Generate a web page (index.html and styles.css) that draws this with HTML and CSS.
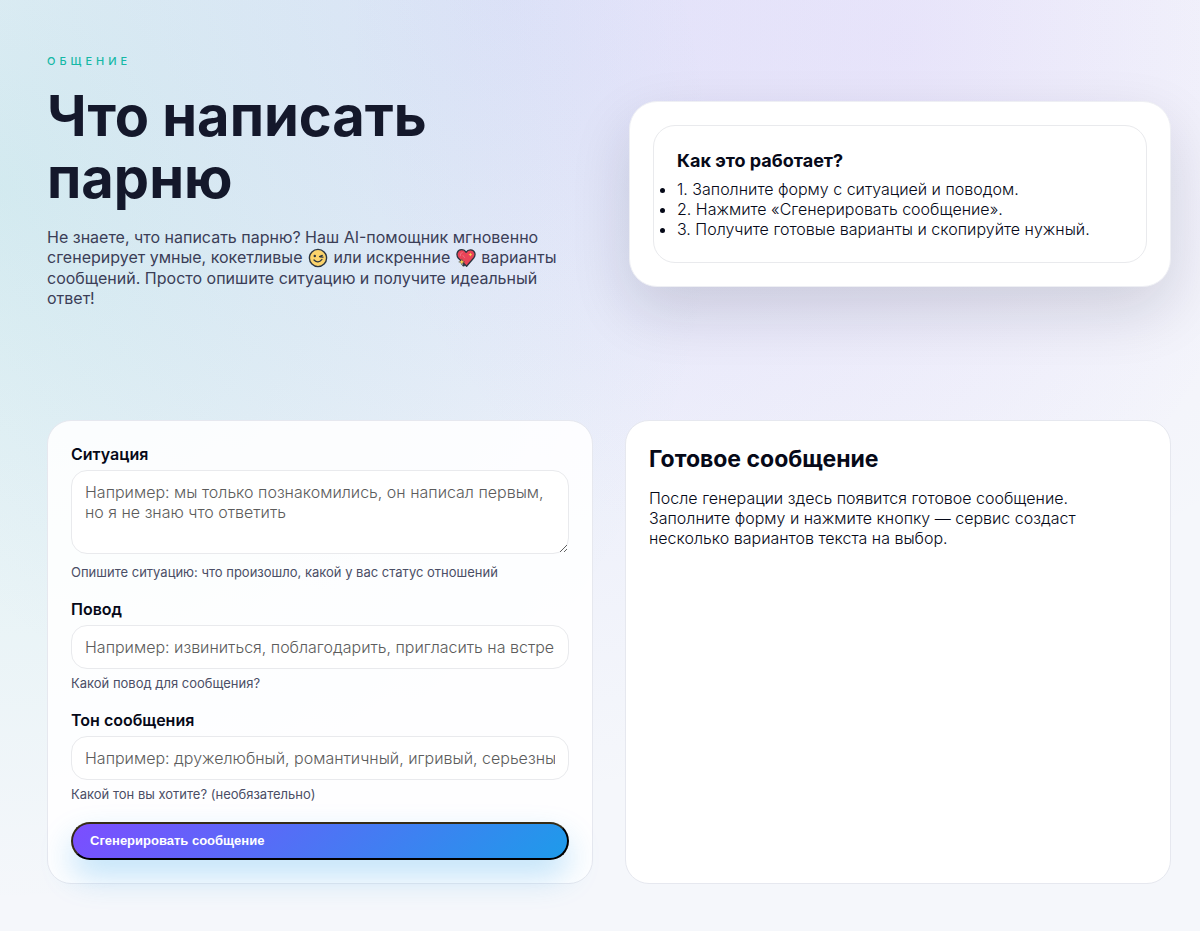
FILE: index.html
```html
<!DOCTYPE html>
<html lang="ru">
<head>
<meta charset="utf-8">
<meta name="viewport" content="width=device-width, initial-scale=1">
<title>Что написать парню</title>
<link rel="stylesheet" href="styles.css">
</head>
<body>
<main class="page">
  <section class="hero">
    <div class="hero-text">
      <p class="eyebrow">Общение</p>
      <h1 class="title">Что написать парню</h1>
      <p class="lead">Не знаете, что написать парню? Наш AI-помощник мгновенно сгенерирует умные, кокетливые
        <svg class="emoji" viewBox="0 0 20 20" role="img" aria-label="Подмигивание"><circle cx="10" cy="10" r="8.6" fill="#fbd36b" stroke="#2b3540" stroke-width="1.4"/><circle cx="6.8" cy="8" r="1.2" fill="#2b3540"/><path d="M11.5 8.600l2.800-1.200M12 8.800l3 .4M6 12q4 4.200 8-.6" fill="none" stroke="#2b3540" stroke-width="1.2" stroke-linecap="round"/></svg>
        или искренние
        <svg class="emoji" viewBox="0 0 20 20" role="img" aria-label="Сверкающее сердце"><path d="M10.6 18.2 2.4 10.3C-.4 6.600 1.200 2 5.300 1.700 7.500 1.600 9.200 2.700 10 4.300c1-1.700 2.700-2.600 4.800-2.500 4 .3 5.500 4.900 2.900 8.200z" fill="#e94458" stroke="#2b3540" stroke-width="1.300" stroke-linejoin="round"/><path d="M4.300 7.800q-.5-3 2-3.300M7 7.500l1.500 2" fill="none" stroke="#f0717f" stroke-width="1" stroke-linecap="round"/><path d="m5.800 10.800.9 2.200 2.200.9-2.200.9-.9 2.200-.9-2.200-2.200-.9 2.200-.9z" fill="#fbd34f" stroke="#2b3540" stroke-width=".4"/><path d="m14.400 4.800.6 1.300 1.300.6-1.300.6-.6 1.300-.6-1.300-1.300-.6 1.300-.6z" fill="#fbd34f"/><circle cx="7.600" cy="17.300" r="1.200" fill="#2b3540"/></svg>
        варианты сообщений. Просто опишите ситуацию и получите идеальный ответ!</p>
    </div>
    <div class="hero-card">
      <div class="steps">
        <h3 class="steps-title">Как это работает?</h3>
        <ul class="steps-list">
          <li>1. Заполните форму с ситуацией и поводом.</li>
          <li>2. Нажмите «Сгенерировать сообщение».</li>
          <li>3. Получите готовые варианты и скопируйте нужный.</li>
        </ul>
      </div>
    </div>
  </section>

  <section class="workspace">
    <form class="card form">
      <div class="field field-area">
        <label for="situation">Ситуация</label>
        <textarea class="control area" id="situation" placeholder="Например: мы только познакомились, он написал первым, но я не знаю что ответить" aria-describedby="situation-hint"></textarea>
        <small class="hint" id="situation-hint">Опишите ситуацию: что произошло, какой у вас статус отношений</small>
      </div>
      <div class="field">
        <label for="reason">Повод</label>
        <input class="control" id="reason" type="text" placeholder="Например: извиниться, поблагодарить, пригласить на встречу" aria-describedby="reason-hint">
        <small class="hint" id="reason-hint">Какой повод для сообщения?</small>
      </div>
      <div class="field">
        <label for="tone">Тон сообщения</label>
        <input class="control" id="tone" type="text" placeholder="Например: дружелюбный, романтичный, игривый, серьезный" aria-describedby="tone-hint">
        <small class="hint" id="tone-hint">Какой тон вы хотите? (необязательно)</small>
      </div>
      <button class="submit" type="button">Сгенерировать сообщение</button>
    </form>
    <section class="card result">
      <h2 class="result-title">Готовое сообщение</h2>
      <p class="result-text">После генерации здесь появится готовое сообщение. Заполните форму и нажмите кнопку — сервис создаст несколько вариантов текста на выбор.</p>
    </section>
  </section>
</main>
</body>
</html>
```
FILE: styles.css
```css
* { box-sizing: border-box; }

body {
  margin: 0;
  min-height: 100vh;
  font-family: Inter, "Liberation Sans", sans-serif;
  font-size: 16px;
  font-weight: 350;
  line-height: 20px;
  color: #060918;
  background:
    radial-gradient(circle at 0% 20%, rgba(20, 184, 166, 0.13), transparent 720px),
    radial-gradient(circle at 42% 0%, rgba(99, 102, 241, 0.12), transparent 800px),
    radial-gradient(circle at 75% 5%, rgba(168, 85, 247, 0.07), transparent 560px),
    #f5f7fb;
}

h1, h2, h3, p, ul { margin: 0; }

.page { padding: 54px 29px 48px 47px; }

.hero {
  display: grid;
  grid-template-columns: 1fr 1fr;
  gap: 40px;
  align-items: center;
}

.hero-text { padding-bottom: 25px; }

.eyebrow {
  font-size: 11px;
  font-weight: 500;
  line-height: 14px;
  letter-spacing: 4px;
  text-transform: uppercase;
  color: #14b8a6;
}

.title {
  margin-top: 17px;
  font-size: 56px;
  line-height: 62px;
  font-weight: 700;
  color: #14182b;
}

.lead {
  margin-top: 18px;
  font-weight: 400;
  color: #3b3e57;
}

.emoji { width: 20px; height: 20px; margin: 0 1px; vertical-align: -5px; }

.hero-card {
  padding: 23px;
  border: 1px solid #eeeff4;
  border-radius: 28px;
  background: #fff;
  box-shadow: 0 24px 60px rgba(15, 23, 42, 0.14);
}

.steps {
  padding: 23px;
  border: 1px solid #e9eaed;
  border-radius: 22px;
}

.steps-title { font-size: 18px; line-height: 23px; font-weight: 700; }
.steps-list { margin-top: 7px; padding: 0; }

.workspace {
  display: grid;
  grid-template-columns: 1fr 1fr;
  gap: 32px;
  margin-top: 87px;
}

.card {
  padding: 24px 23px 23px;
  border: 1px solid #e6e8ef;
  border-radius: 24px;
  background: rgba(255, 255, 255, 0.88);
}

.result { background: #fff; }

.form { display: flex; flex-direction: column; gap: 20px; }

.field { display: flex; flex-direction: column; gap: 6px; }
.field-area .hint { margin-top: 4px; }
.field label { font-weight: 600; line-height: 19px; }

.control {
  display: block;
  width: 100%;
  padding: 11px 13px;
  border: 1px solid #e9eaed;
  border-radius: 16px;
  background: #fff;
  color: inherit;
  font: inherit;
}

.control::placeholder { color: #5c5c5c; }
.area { height: 84px; resize: vertical; }

.hint { font-size: 13px; line-height: 16px; font-weight: 400; color: #4b4e66; }

.submit {
  padding: 9px 17px;
  border: 2px solid;
  border-color: #352b16 #000 #000 #352b16;
  border-radius: 20px;
  background: linear-gradient(135deg, #7c4dff, #1e9bea);
  box-shadow: 0 16px 32px rgba(30, 155, 234, 0.28);
  color: #fff;
  font: bold 13px/16px "Liberation Sans", Arial, sans-serif;
  text-align: left;
}

.result-title { font-size: 23px; line-height: 28px; font-weight: 700; }
.result-text { margin-top: 15px; max-width: 460px; }

@media (max-width: 800px) {
  .hero, .workspace { grid-template-columns: 1fr; }
}
```
